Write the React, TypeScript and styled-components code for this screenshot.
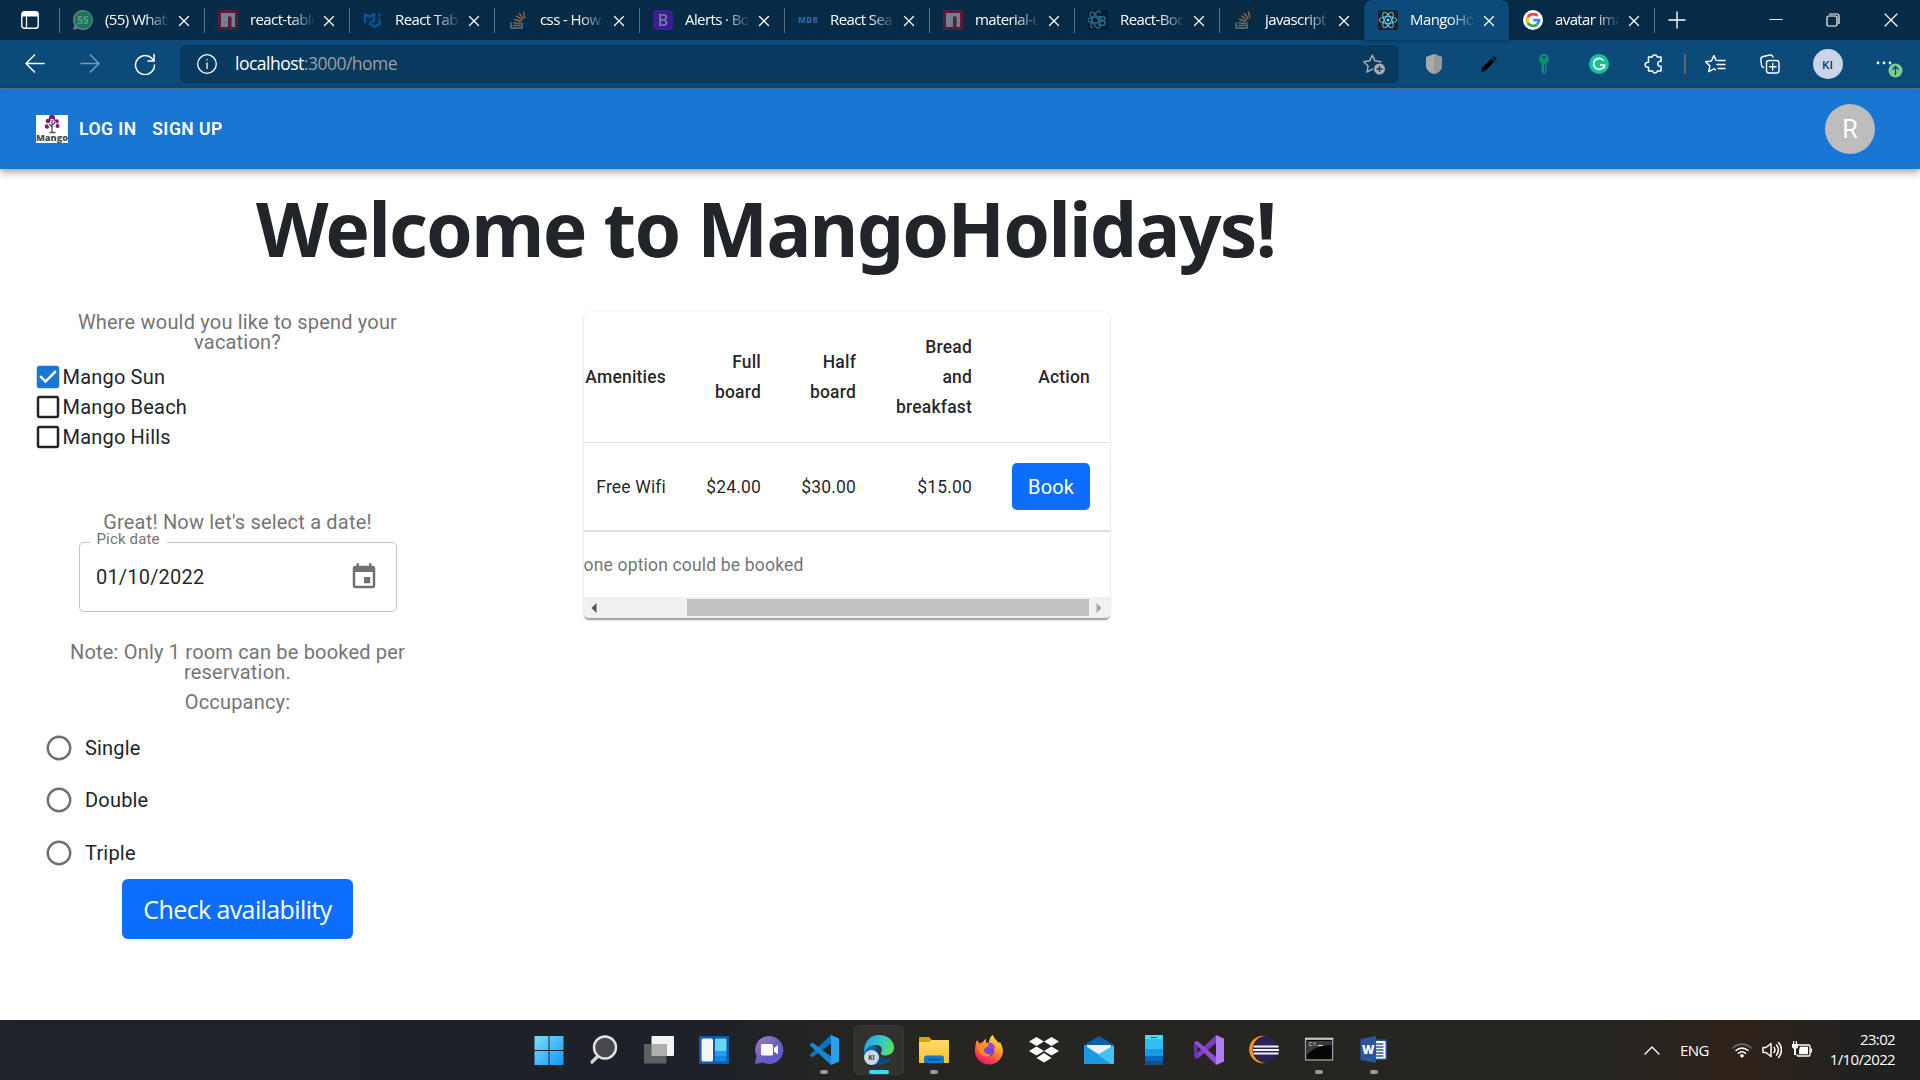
import React from "react";
import styled, { createGlobalStyle, css } from "styled-components";

const GlobalStyle = createGlobalStyle`
  *, *::before, *::after { box-sizing: border-box; }
  html, body { margin: 0; padding: 0; background: #fff; overflow: hidden; }
  body { font-family: Roboto, "Liberation Sans", sans-serif; color: #212529; }
  svg { display: block; flex: none; }
  button { border: 0; margin: 0; padding: 0; background: none; font: inherit; color: inherit; }
`;

const uiFont = css`font-family: "Open Sans", "Noto Sans", sans-serif;`;

const Screen = styled.div`
  width: 1920px;
  height: 1080px;
  display: flex;
  flex-direction: column;
  overflow: hidden;
  background: #fff;
`;

/* ---------- Browser chrome ---------- */

const TabStrip = styled.div`
  height: 40px;
  flex: none;
  display: flex;
  background: #072b47;
  color: #fff;
  ${uiFont}
`;

const TabActions = styled.div`
  width: 59px;
  flex: none;
  display: flex;
  align-items: center;
  justify-content: center;
`;

const Tab = styled.div<{ $active?: boolean; $line?: boolean }>`
  position: relative;
  width: 145px;
  flex: none;
  display: flex;
  align-items: center;
  padding-left: 14px;
  border-radius: 8px 8px 0 0;
  background: ${(p) => (p.$active ? "#0c4a7a" : "transparent")};
  box-shadow: ${(p) => (p.$active ? "0 0 4px rgba(0,0,0,.5)" : "none")};
  &::before {
    content: "";
    position: absolute;
    left: 0;
    top: 8px;
    width: 1px;
    height: 25px;
    background: ${(p) => (p.$line ? "#60727f" : "transparent")};
  }
`;

const Favicon = styled.span<{ $dim?: boolean }>`
  width: 20px;
  height: 20px;
  flex: none;
  opacity: ${(p) => (p.$dim ? 0.6 : 1)};
`;

const TabTitle = styled.span`
  width: 63px;
  flex: none;
  margin-left: 12px;
  overflow: hidden;
  white-space: nowrap;
  font-size: 15px;
  line-height: 22px;
  letter-spacing: -0.6px;
  padding-bottom: 2px;
  mask-image: linear-gradient(90deg, #000 62%, transparent 104%);
`;

const TabClose = styled.span`
  width: 12px;
  height: 12px;
  margin-left: 10px;
  margin-top: 1px;
`;

const NewTab = styled.div`
  position: relative;
  width: 93px;
  display: flex;
  align-items: center;
  padding-left: 14px;
  &::before {
    content: "";
    position: absolute;
    left: 0;
    top: 8px;
    width: 1px;
    height: 25px;
    background: #60727f;
  }
`;

const WindowControls = styled.div`
  width: 173px;
  display: flex;
  svg { margin: 12px 20.75px 0 20.75px; }
`;

const Toolbar = styled.div`
  height: 48px;
  flex: none;
  display: flex;
  align-items: center;
  background: #0c4a7a;
  color: #fff;
  ${uiFont}
`;

const NavCell = styled.div<{ $w: number; $faded?: boolean }>`
  width: ${(p) => p.$w}px;
  flex: none;
  display: flex;
  justify-content: center;
  opacity: ${(p) => (p.$faded ? 0.45 : 1)};
`;

const AddressBar = styled.div`
  width: 1219px;
  height: 38px;
  flex: none;
  display: flex;
  align-items: center;
  padding: 0 13px 0 17px;
  border-radius: 5px;
  background: #083a5f;
`;

const Url = styled.span`
  flex: 1;
  margin-left: 18px;
  padding-bottom: 2px;
  font-size: 17.5px;
  letter-spacing: -0.5px;
  color: #9a9fa3;
  b { font-weight: 400; color: #fff; }
`;

const ToolDivider = styled.div`
  width: 2px;
  height: 20px;
  margin-left: -6px;
  background: #5f6870;
`;

const Profile = styled.div`
  width: 30px;
  height: 30px;
  display: grid;
  place-items: center;
  border-radius: 50%;
  background: #cbd5e9;
  color: #1c2a5c;
  font-size: 11.5px;
  font-weight: 600;
`;

const ChromeEdge = styled.div`
  height: 1px;
  flex: none;
  background: #4f7790;
`;

/* ---------- Site header ---------- */

const AppBar = styled.header`
  height: 80px;
  flex: none;
  display: flex;
  align-items: center;
  padding: 0 45px 0 36px;
  background: #1976d2;
  color: #fff;
  z-index: 1;
  box-shadow: 0 2.5px 5px -1px rgba(0,0,0,.2), 0 5px 6.25px 0 rgba(0,0,0,.14), 0 1.25px 12.5px 0 rgba(0,0,0,.12);
`;

const NavLinks = styled.nav`
  flex: 1;
  display: flex;
  gap: 15.5px;
  margin-left: 11px;
  font-size: 17.5px;
  font-weight: 600;
  line-height: 30px;
  letter-spacing: 0.5px;
`;

const Avatar = styled.div`
  width: 50px;
  height: 50px;
  display: grid;
  place-items: center;
  border-radius: 50%;
  background: #bdbdbd;
  font-size: 25px;
`;

/* ---------- Page ---------- */

const Page = styled.main`
  flex: 1;
  min-height: 0;
`;

const Title = styled.h1`
  margin: 0;
  height: 143px;
  padding: 14px 0 0 256px;
  font-family: "Noto Sans", "Open Sans", sans-serif;
  font-size: 75px;
  font-weight: 700;
  line-height: 90px;
  letter-spacing: -1.7px;
  white-space: nowrap;
  color: #212529;
`;

const Columns = styled.div`
  display: flex;
  align-items: flex-start;
`;

const Form = styled.form`
  width: 583.5px;
  display: flex;
  flex-direction: column;
  padding-left: 33px;
`;

const Legend = styled.p<{ $top?: number }>`
  width: 409px;
  margin: ${(p) => p.$top ?? 0}px 0 0;
  text-align: center;
  font-size: 20px;
  line-height: 20px;
  letter-spacing: 0.19px;
  color: #757575;
`;

const CheckList = styled.div`
  margin-top: 10px;
  height: 90px;
`;

const CheckRow = styled.label`
  display: flex;
  align-items: center;
  height: 30px;
  font-size: 20px;
  letter-spacing: 0.19px;
  svg { margin-right: -0.5px; }
`;

const DateField = styled.div`
  position: relative;
  width: 318px;
  height: 70px;
  display: flex;
  align-items: center;
  justify-content: space-between;
  margin: 10px 0 0 46px;
  padding: 0 17px 0 16px;
  border: 1px solid #c4c4c4;
  border-radius: 5px;
  font-size: 20px;
  letter-spacing: 0.19px;
  color: rgba(0, 0, 0, 0.87);
`;

const FieldLabel = styled.span`
  position: absolute;
  left: 10px;
  top: -14px;
  padding: 0 7px 0 6.5px;
  background: #fff;
  font-size: 15px;
  line-height: 20px;
  letter-spacing: 0.16px;
  color: #757575;
`;

const Radios = styled.div`
  margin-top: 9.5px;
`;

const RadioRow = styled.label`
  display: flex;
  align-items: center;
  gap: 11px;
  height: 52.5px;
  padding-left: 11px;
  font-size: 20px;
  letter-spacing: 0.19px;
`;

const Primary = styled.button<{ $large?: boolean }>`
  border-radius: ${(p) => (p.$large ? 6 : 5)}px;
  background: #0d6efd;
  color: #fff;
  ${(p) =>
    p.$large
      ? css`
          ${uiFont}
          width: 231px;
          height: 60px;
          margin: 0 0 0 89px;
          font-size: 25px;
          letter-spacing: -0.6px;
        `
      : css`
          width: 78px;
          height: 47px;
          font-size: 20px;
          letter-spacing: 0.1px;
        `}
`;

const Card = styled.section`
  width: 526.5px;
  overflow: hidden;
  border-radius: 5px;
  background: #fff;
  box-shadow: 0 2.5px 1.25px -1.25px rgba(0,0,0,.2), 0 1.25px 1.25px 0 rgba(0,0,0,.14), 0 1.25px 3.75px 0 rgba(0,0,0,.12);
`;

const Row = styled.div<{ $head?: boolean }>`
  display: grid;
  grid-template-columns: 102.5px 95px 95px 116px 118px;
  align-items: center;
  height: ${(p) => (p.$head ? 131 : 88)}px;
  border-bottom: 1px solid #e0e0e0;
  font-size: 17.5px;
  font-weight: ${(p) => (p.$head ? 500 : 400)};
  line-height: 30px;
  letter-spacing: ${(p) => (p.$head ? 0.19 : 0.16)}px;
  color: rgba(0, 0, 0, 0.87);
`;

const Cell = styled.div`
  display: flex;
  flex-direction: column;
  align-items: flex-end;
  padding-right: 20px;
`;

const Caption = styled.p`
  margin: 0;
  height: 66px;
  border-top: 1px solid #e0e0e0;
  padding-top: 20px;
  font-size: 17.5px;
  line-height: 26px;
  letter-spacing: 0.18px;
  color: #757575;
`;

const ScrollBar = styled.div`
  height: 21px;
  display: flex;
  align-items: center;
  background: #f1f1f1;
`;

const Arrow = styled.span<{ $right?: boolean }>`
  width: 21px;
  display: flex;
  justify-content: center;
  color: ${(p) => (p.$right ? "#a3a3a3" : "#505050")};
  transform: ${(p) => (p.$right ? "scaleX(-1)" : "none")};
`;

const Thumb = styled.span`
  width: 402px;
  height: 17px;
  margin-left: 82px;
  background: #c1c1c1;
`;

/* ---------- Taskbar ---------- */

const Taskbar = styled.footer`
  height: 60px;
  flex: none;
  display: flex;
  align-items: center;
  padding-left: 524px;
  background: linear-gradient(90deg, #1e2229 0%, #1e2228 38%, #262521 45%, #262521 83%, #2c221a 90%, #2a221b 93%, #212121 97%, #202020 100%);
  color: #fff;
  ${uiFont}
`;

const Apps = styled.div`
  display: flex;
  flex: none;
  width: 880px;
  gap: 5px;
`;

const AppTile = styled.div<{ $active?: boolean; $running?: boolean }>`
  position: relative;
  width: 50px;
  height: 50px;
  flex: none;
  display: grid;
  place-items: center;
  border-radius: 5px;
  background: ${(p) => (p.$active ? "#32312f" : "transparent")};
  border: 1px solid ${(p) => (p.$active ? "#3b3a38" : "transparent")};
  &::after {
    content: "";
    position: absolute;
    left: 50%;
    bottom: 0;
    width: ${(p) => (p.$active ? 20 : 8)}px;
    height: 4px;
    border-radius: 2px;
    transform: translateX(-50%);
    background: ${(p) => (p.$active ? "#2fe0fb" : p.$running ? "#9a9a99" : "transparent")};
  }
`;

const Tray = styled.div`
  flex: 1;
  display: flex;
  align-items: center;
  padding-left: 240px;
  font-size: 15px;
`;

const Lang = styled.span`
  margin: 0 22px 0 20px;
  width: 30px;
  letter-spacing: -0.6px;
`;

const Clock = styled.div`
  flex: 1;
  padding: 0 25px 2px 0;
  text-align: right;
  line-height: 20px;
  letter-spacing: -0.65px;
`;

/* ---------- Drawings ---------- */

type IconProps = { w: number; h?: number; box?: string; sw?: number; children: React.ReactNode };
const Line = ({ w, h = w, box, sw = 1.4, children }: IconProps) => (
  <svg width={w} height={h} viewBox={box ?? `0 0 ${w} ${h}`} fill="none" stroke="currentColor" strokeWidth={sw} strokeLinecap="round" strokeLinejoin="round">
    {children}
  </svg>
);
const Fill = ({ w, h = w, box, children }: IconProps) => (
  <svg width={w} height={h} viewBox={box ?? `0 0 ${w} ${h}`}>{children}</svg>
);

const svgText = { fontFamily: '"Open Sans", sans-serif', textAnchor: "middle" as const };

const WhatsApp = () => (
  <Fill w={20}>
    <path d="M10 0a10 10 0 1 1-4.8 18.8L0 20l1.300-5A10 10 0 0 1 10 0z" fill="#9fb0b4" />
    <circle cx="10.200" cy="9.900" r="8.500" fill="#10b35a" />
    <text x="10" y="13.500" fontSize="10" fontWeight="700" fill="#b9d0c6" {...svgText}>55</text>
  </Fill>
);
const Npm = () => (
  <Fill w={20}>
    <rect width="20" height="20" fill="#931228" />
    <path d="M3 3h14v14h-3.500V6.500H10V17H3z" fill="#aebccb" />
  </Fill>
);
const Mui = () => (
  <Line w={20} sw={2.300}>
    <g stroke="#0a70d0">
      <path d="M2 12V4l4.500 3L11 4v6.500M7 14l4.500 3 5-3V9.500M11 10.500 7 13M16.500 4v1.500" />
    </g>
  </Line>
);
const StackOverflow = () => (
  <Line w={20} sw={1.500}>
    <path d="M3 13v5h11v-5" stroke="#93a3ad" />
    <path d="M5.500 15.500h6.500M5.800 12.700l6.400.7M6.600 9.500l6 1.800M8.600 6.200l5 3.500M11.500 3.500l3.500 5M15.500 2l1.300 5.500" stroke="#d58845" />
  </Line>
);
const Bootstrap = () => (
  <Fill w={20}>
    <rect width="20" height="20" rx="3.500" fill="#5f18c2" />
    <text x="10" y="16" fontSize="16" fontWeight="600" fill="#b9b2dd" {...svgText}>B</text>
  </Fill>
);
const Mdb = () => (
  <Fill w={20}>
    <text x="10" y="13" fontSize="8" fontWeight="800" textLength="20" fill="#3a94dc" {...svgText}>MD<tspan fill="#7065e0">B</tspan></text>
  </Fill>
);
const ReactBootstrap = () => (
  <Fill w={20}>
    <rect width="20" height="20" fill="#03121f" />
    <g fill="none" stroke="#2f9bb8" strokeWidth="1.400">
      <ellipse cx="7" cy="10" rx="7" ry="3" />
      <ellipse cx="7" cy="10" rx="3" ry="9" transform="rotate(-25 7 10)" />
      <path d="M5 17C2 20 2 12 7 4c3-4 5-4 5-1" />
    </g>
    <text x="14" y="15.500" fontSize="15" fontWeight="600" fill="#2f9bb8" {...svgText}>B</text>
  </Fill>
);
const ReactLogo = () => (
  <Fill w={20}>
    <rect width="20" height="20" rx="1.500" fill="#20232a" />
    <g fill="none" stroke="#61dafb" strokeWidth=".9">
      <ellipse cx="10" cy="10" rx="8.800" ry="3.400" />
      <ellipse cx="10" cy="10" rx="8.800" ry="3.400" transform="rotate(60 10 10)" />
      <ellipse cx="10" cy="10" rx="8.800" ry="3.400" transform="rotate(120 10 10)" />
    </g>
    <circle cx="10" cy="10" r="1.500" fill="#61dafb" />
  </Fill>
);
const Google = () => (
  <Fill w={20}>
    <circle cx="10" cy="10" r="10" fill="#fff" />
    <g fill="none" strokeWidth="2.800">
      <path d="M14.400 5.900A6 6 0 0 0 4.900 7" stroke="#ea4335" />
      <path d="M4.900 6.900a6 6 0 0 0 0 6.200" stroke="#fbbc05" />
      <path d="M4.900 13a6 6 0 0 0 8.900 1.600" stroke="#34a853" />
      <path d="M13.700 14.700A6 6 0 0 0 16 10.200H10.200" stroke="#4285f4" />
    </g>
  </Fill>
);
const Cross = () => <Line w={12} sw={1.300}><path d="M1.500 1.500l9 9M10.500 1.500l-9 9" /></Line>;

const starPath = "M9 1.500l2.300 4.900 5.200.7-3.800 3.700.9 5.300L9 13.600l-4.600 2.500.9-5.300L1.500 7.100l5.200-.7z";

const tabs: { title: string; icon: React.ReactNode; active?: boolean; noLine?: boolean; bright?: boolean }[] = [
  { title: "(55) WhatsApp", icon: <WhatsApp /> },
  { title: "react-table", icon: <Npm /> },
  { title: "React Table", icon: <Mui /> },
  { title: "css - How to", icon: <StackOverflow /> },
  { title: "Alerts · Bootstrap", icon: <Bootstrap /> },
  { title: "React Search", icon: <Mdb /> },
  { title: "material-ui", icon: <Npm /> },
  { title: "React-Bootstrap", icon: <ReactBootstrap /> },
  { title: "javascript -", icon: <StackOverflow /> },
  { title: "MangoHolidays", icon: <ReactLogo />, active: true, noLine: true, bright: true },
  { title: "avatar image", icon: <Google />, noLine: true, bright: true },
];

const MangoLogo = () => (
  <Fill w={32} h={28}>
    <rect width="32" height="28" fill="#fff" />
    <g fill="#82186f">
      <circle cx="16" cy="3" r="3.200" />
      <circle cx="12" cy="6" r="2.300" />
      <circle cx="20.500" cy="6.500" r="2.300" />
      <circle cx="11" cy="11.500" r="2.200" />
      <circle cx="21.500" cy="11" r="2" />
    </g>
    <path d="M16 4v12M16.500 10l3.500-3M16 12l-3.500-3" stroke="#fff" strokeWidth="2.800" />
    <path d="M16 5v12M16.500 10l3-3M16 12l-3-3M13.500 17.500h6" stroke="#55506a" strokeWidth="1.300" />
    <text x="16" y="25.500" fontSize="9" fontWeight="800" textLength="32" lengthAdjust="spacingAndGlyphs" fill="#46504c" {...svgText}>Mango</text>
  </Fill>
);

const Checkbox = ({ on }: { on?: boolean }) => (
  <Fill w={30} box="0 0 24 24">
    <path
      fill={on ? "#1976d2" : "#212529"}
      d={on
        ? "M19 3H5c-1.110 0-2 .9-2 2v14c0 1.100.89 2 2 2h14c1.110 0 2-.9 2-2V5c0-1.100-.89-2-2-2zm-9 14l-5-5 1.410-1.410L10 14.170l7.590-7.590L19 8l-9 9z"
        : "M19 5v14H5V5h14m0-2H5c-1.100 0-2 .9-2 2v14c0 1.100.9 2 2 2h14c1.100 0 2-.9 2-2V5c0-1.100-.9-2-2-2z"}
    />
  </Fill>
);
const RadioIcon = () => (
  <Fill w={30} box="0 0 24 24"><circle cx="12" cy="12" r="9" fill="none" stroke="#707070" strokeWidth="1.900" /></Fill>
);

/* Taskbar application icons, each on a 30px square */
const Start = () => (
  <Fill w={30}>
    <defs><linearGradient id="st" x1="0" y1="0" x2="1" y2="1"><stop offset="0" stopColor="#80dcfc" /><stop offset="1" stopColor="#1098f8" /></linearGradient></defs>
    <path fill="url(#st)" d="M.5 1.500A.5.5 0 0 1 1 1h13.500v14H.5zM15.500 1H29a.5.5 0 0 1 .5.500V15h-14zM.5 16h14v14H1a.5.5 0 0 1-.5-.5zM15.500 16h14v13.500a.5.5 0 0 1-.5.500H15.500z" />
  </Fill>
);
const Search = () => (
  <Fill w={30}>
    <path d="M9.500 20.500L3 27" stroke="#d8d8d8" strokeWidth="3.200" strokeLinecap="round" />
    <circle cx="16" cy="12.500" r="11" fill="#47484c" stroke="#e4e4e4" strokeWidth="2.400" />
  </Fill>
);
const TaskView = () => (
  <Fill w={30}>
    <rect x="7.500" y="1" width="22.500" height="20" rx="1" fill="#f3f3f3" />
    <rect x="0" y="9" width="22.500" height="19.500" rx="1" fill="#5f6062" />
    <path d="M7.500 9h15v12h-15z" fill="#aeaeae" />
  </Fill>
);
const Widgets = () => (
  <Fill w={30}>
    <rect y="1" width="30" height="28" rx="1" fill="#0b5cac" />
    <rect x="2.500" y="3.500" width="11.500" height="23" rx="1.500" fill="#f5f5f5" />
    <rect x="16" y="3.500" width="11.500" height="12.500" rx="1" fill="#68d3fb" />
    <rect x="16" y="16" width="11.500" height="5" fill="#1ba0f4" />
    <rect x="16" y="21" width="11.500" height="5.500" fill="#1089e6" />
  </Fill>
);
const Chat = () => (
  <Fill w={30}>
    <defs><linearGradient id="ch" x1="0" y1="0" x2="1" y2="1"><stop offset="0" stopColor="#a97fb8" /><stop offset=".5" stopColor="#6960c4" /><stop offset="1" stopColor="#5558cf" /></linearGradient></defs>
    <path d="M15.500 1A14 14 0 1 1 9 27.500L1 29l1.500-8A14 14 0 0 1 15.500 1z" fill="url(#ch)" />
    <rect x="7" y="9" width="12" height="11.500" rx="1.500" fill="#fff" />
    <path d="M20 13l4-3v9.500l-4-3z" fill="#fff" />
  </Fill>
);
const VsCode = () => (
  <Fill w={30}>
    <path d="M22 0L.5 20 3.500 22.500 22 8.500z" fill="#0873c4" />
    <path d="M.5 10l3-2.500L22 21.500V30z" fill="#1688d4" />
    <path d="M22 0l8 3.500v23L22 30z" fill="#27a2ee" />
  </Fill>
);
const Edge = () => (
  <Fill w={30}>
    <defs><linearGradient id="ed" x1="0" y1=".3" x2="1" y2=".5"><stop offset="0" stopColor="#2aa5e5" /><stop offset=".6" stopColor="#38c9c0" /><stop offset="1" stopColor="#60dd5a" /></linearGradient></defs>
    <path d="M.5 15C4 8 14 10 14 15c-2 4 2 9 8 9 3 0 4-1.500 5.500-1.500C25 27 20 29.500 14.500 29.500A14 14 0 0 1 .5 15z" fill="#0f62ac" />
    <path d="M.3 13C2 4 8 0 15 0c9 0 15 6 15 12.500 0 6-5 8-9 8-3 0-5-1.500-4-3 2-3 .5-7.500-4.500-7.500C6 10 1.500 13 .3 19z" fill="url(#ed)" />
    <path d="M10 15c-2 5-1 11 4 14 6 1 11-1 13.500-6-4 2-9 1-11.500-2-2-3-2-4-1.500-7-1.500-1-3.500-1-4.500 1z" fill="#0a4a80" />
    <circle cx="7.500" cy="22.500" r="7.500" fill="#cdd7ea" />
    <text x="7.500" y="25" fontSize="6.500" fontWeight="700" fill="#26345f" {...svgText}>KI</text>
  </Fill>
);
const Folder = () => (
  <Fill w={30}>
    <defs><linearGradient id="fo" x1="0" y1="0" x2="0" y2="1"><stop offset="0" stopColor="#ffdd6a" /><stop offset="1" stopColor="#fbbf2c" /></linearGradient></defs>
    <path d="M0 3a1 1 0 0 1 1-1h9l3 3v5H0z" fill="#dfa006" />
    <path d="M0 7h10l3-2h16a1 1 0 0 1 1 1v22H0z" fill="url(#fo)" />
    <path d="M5 28v-5a2.500 2.500 0 0 1 2.500-2.500h15A2.500 2.500 0 0 1 25 23v5z" fill="#1179cc" />
    <path d="M9 24.500h12" stroke="#0b4f96" strokeWidth="1.400" strokeLinecap="round" />
  </Fill>
);
const Firefox = () => (
  <Fill w={30}>
    <defs><linearGradient id="ff" x1=".8" y1="0" x2=".3" y2="1"><stop offset="0" stopColor="#fff044" /><stop offset=".45" stopColor="#ff9228" /><stop offset=".8" stopColor="#fb3852" /><stop offset="1" stopColor="#e8177a" /></linearGradient></defs>
    <path d="M3 5l2.500 3.500L9 7c1-2 2.500-3 3-3v4l3-1c0-3 2-6 4-7 1 4 4 5 5.500 8l1.500-1c2 3 3 7 3 9a14 13.500 0 1 1-28 0C1 11 2 7 3 5z" fill="url(#ff)" />
    <circle cx="15" cy="16" r="5.500" fill="#7b45d8" />
    <path d="M4 10c5-2 7 0 10 1-1 2-4 2-4 4 0 3 3 5 7 4-4 5-13 3-13-9z" fill="#ff8a24" />
    <path d="M13.500 8c3-2 8 1 8 7 0-2-3-4-6-3.500z" fill="#9d42e2" />
  </Fill>
);
const Dropbox = () => (
  <Fill w={30}>
    <path fill="#fff" d="M7.500 2L15 6.500 7.500 11 0 6.500zM22.500 2L30 6.500 22.500 11 15 6.500zM7.500 11.500L15 16l-7.500 4.500L0 16zM22.500 11.500L30 16l-7.500 4.500L15 16zM15 18l7.500 5L15 27.500 7.500 23z" />
  </Fill>
);
const Mail = () => (
  <Fill w={30}>
    <path d="M0 10L15 1l15 9v5H0z" fill="#0b5da8" />
    <path d="M3 10h24v8l-12 5-12-6z" fill="#f1efed" />
    <path d="M0 10l15 9L30 10v18a1 1 0 0 1-1 1H1a1 1 0 0 1-1-1z" fill="#3fc5f4" />
    <path d="M0 10l27 19H1a1 1 0 0 1-1-1z" fill="#1d97e2" />
  </Fill>
);
const Phone = () => (
  <Fill w={30}>
    <rect x="6" width="18" height="30" rx="1" fill="#45dffc" />
    <path d="M6 4h18v11H6z" fill="#34bdf0" />
    <path d="M6 14h18v8H6z" fill="#179be3" />
    <path d="M6 21h18v5H6z" fill="#0569bb" />
    <path d="M6 26h18v3a1 1 0 0 1-1 1H7a1 1 0 0 1-1-1z" fill="#174f83" />
    <path d="M12 2.500h6" stroke="#0e6391" />
  </Fill>
);
const VisualStudio = () => (
  <Fill w={30}>
    <path d="M0 7.500L3.500 6v18L0 22.500z" fill="#6b2fa8" />
    <path d="M3.500 24L22 8V0L2 19z" fill="#7a3cbc" />
    <path d="M0 7.500L3.500 6 22 22v8z" fill="#8d50cf" />
    <path d="M22 0l8 3.500v23L22 30z" fill="#b47af0" />
  </Fill>
);
const Eclipse = () => (
  <Fill w={30}>
    <circle cx="14" cy="14.500" r="13.800" fill="#f7941e" />
    <circle cx="17" cy="14.500" r="13.500" fill="#211f1f" />
    <circle cx="17" cy="14.500" r="12.600" fill="#2c2255" />
    <path d="M4.500 11.500h25M4 15h26M4.500 18.500h25" stroke="#f4f2fa" strokeWidth="1.800" />
  </Fill>
);
const Terminal = () => (
  <Fill w={30}>
    <rect x="1.600" y="3.500" width="27" height="21.500" fill="#050505" stroke="#9a9a9e" strokeWidth="1.400" />
    <path d="M2.300 6h25.500v4C16 10 8 14 4 19l-1.700 1z" fill="#3b3b3b" />
    <path d="M1 3.800h28" stroke="#c8ccd4" strokeWidth="2" />
    <text x="8.500" y="11" fontSize="6" fill="#e5e5e5" {...svgText}>C:\</text>
    <path d="M14 10.500h5" stroke="#e5e5e5" />
  </Fill>
);
const Word = () => (
  <Fill w={30}>
    <rect x="15" y="4.500" width="13" height="20.500" rx="1" fill="#2b579a" />
    <path d="M16 6h10.500v17.500H16z" fill="#fff" />
    <path d="M17 9h7.500M17 12h7.500M17 15h7.500M17 18h7.500M17 21h7.500" stroke="#2b579a" strokeWidth="1.300" />
    <path d="M1.500 4L17 1v27L1.500 25z" fill="#2b579a" />
    <text x="9.300" y="19" fontSize="12" fontWeight="800" fill="#fff" {...svgText}>W</text>
  </Fill>
);

const apps: { icon: React.ReactNode; active?: boolean; running?: boolean }[] = [
  { icon: <Start /> }, { icon: <Search /> }, { icon: <TaskView /> }, { icon: <Widgets /> }, { icon: <Chat /> },
  { icon: <VsCode />, running: true }, { icon: <Edge />, active: true }, { icon: <Folder />, running: true },
  { icon: <Firefox /> }, { icon: <Dropbox /> }, { icon: <Mail /> }, { icon: <Phone /> }, { icon: <VisualStudio /> },
  { icon: <Eclipse /> }, { icon: <Terminal />, running: true }, { icon: <Word />, running: true },
];

const ArrowHead = () => <Fill w={6} h={10}><path d="M5.500 0v10L.5 5z" fill="currentColor" /></Fill>;

export default function App() {
  return (
    <Screen>
      <GlobalStyle />
      <TabStrip>
        <TabActions>
          <Fill w={18}>
            <rect x=".8" y=".8" width="16.400" height="16.400" rx="2.500" fill="none" stroke="#fff" strokeWidth="1.400" />
            <path d="M1 1h16v4.500H1z" fill="#fff" /><path d="M5.500 5v12" stroke="#fff" strokeWidth="1.300" />
          </Fill>
        </TabActions>
        {tabs.map((t, i) => (
          <Tab key={i} $active={t.active} $line={!t.noLine}>
            <Favicon $dim={!t.bright}>{t.icon}</Favicon>
            <TabTitle>{t.title}</TabTitle>
            <TabClose><Cross /></TabClose>
          </Tab>
        ))}
        <NewTab><Line w={18} sw={1.400}><path d="M9 1v16M1 9h16" /></Line></NewTab>
        <WindowControls>
          <Line w={16} sw={1.200}><path d="M2 7.500h12" /></Line>
          <Line w={16} sw={1.200}><rect x="2" y="4" width="10" height="10" rx="1.500" /><path d="M4.500 2H12a2 2 0 0 1 2 2v7.500" /></Line>
          <Line w={16} sw={1.200}><path d="M2 2l12 12M14 2L2 14" /></Line>
        </WindowControls>
      </TabStrip>

      <Toolbar>
        <NavCell $w={70}><Line w={20} sw={1.500}><path d="M19 9.500H1M9.500 1L1 9.500 9.500 18" /></Line></NavCell>
        <NavCell $w={40} $faded><Line w={20} sw={1.500}><path d="M1 9.500h18M10.500 1L19 9.500 10.500 18" /></Line></NavCell>
        <NavCell $w={70}><Line w={22} sw={1.500}><path d="M19.800 8.500A9.500 9.500 0 1 0 20.500 12M20 1.500v6.500h-6" /></Line></NavCell>
        <AddressBar>
          <Line w={20} sw={1.300}><circle cx="10" cy="10" r="9.300" /><path d="M10 9v5.500M10 5.700v.2" /></Line>
          <Url><b>localhost</b>:3000/home</Url>
          <Fill w={24}>
            <path d={starPath} transform="translate(0 1.500) scale(1.150)" fill="none" stroke="#a9adaf" strokeWidth="1.300" strokeLinejoin="round" />
            <circle cx="17.500" cy="17" r="6.500" fill="#083a5f" /><circle cx="17.500" cy="17" r="5.500" fill="#a9adaf" />
            <path d="M17.500 14v6M14.500 17h6" stroke="#083a5f" strokeWidth="1.300" />
          </Fill>
        </AddressBar>
        <NavCell $w={70}>
          <Fill w={16} h={20}><path d="M8 0l8 3v9c0 4-4 7-8 8-4-1-8-4-8-8V3z" fill="#aaa" /><path d="M8 0l8 3v9c0 4-4 7-8 8z" fill="#999" /></Fill>
        </NavCell>
        <NavCell $w={39}>
          <Fill w={16}><path d="M0 16l1-4L10.500 2.500l3 3L4 15zM11.500 1.500L13 0l3 3-1.500 1.500z" fill="#000" /></Fill>
        </NavCell>
        <NavCell $w={72}>
          <Fill w={10} h={20}><circle cx="5" cy="5" r="5" fill="#07906f" /><circle cx="5" cy="3.500" r="1.500" fill="#0c4a7a" /><path d="M2.500 9h5v9L5 20l-2.500-2z" fill="#07906f" /><path d="M5.500 10v8" stroke="#0c4a7a" /></Fill>
        </NavCell>
        <NavCell $w={37}>
          <Fill w={20}><circle cx="10" cy="10" r="10" fill="#15c39a" /><path d="M14.500 6.500a5.500 5.500 0 1 0 1 4.500h-4.500M15.300 10.500v4" fill="none" stroke="#fff" strokeWidth="1.700" /></Fill>
        </NavCell>
        <NavCell $w={73}>
          <Line w={20} sw={1.500}><path d="M4.500 3h3.700a2.600 2.600 0 0 1 5 0h3.800v4.500c-4-1.300-4.500 5-.5 4.800l.5-.1V17h-3.500a2.600 2.600 0 0 1-5 0h-4v-3.800c-4.500 1-4.500-5.700 0-5z" /></Line>
        </NavCell>
        <ToolDivider />
        <NavCell $w={57}>
          <Fill w={22}>
            <path d={starPath} transform="translate(0 1) scale(1.100)" fill="none" stroke="#fff" strokeWidth="1.300" strokeLinejoin="round" />
            <path d="M12 8h10v12H12z" fill="#0c4a7a" /><path d="M14 7.500h7M13 11.500h8M14 15.500h7" stroke="#fff" strokeWidth="1.400" strokeLinecap="round" />
          </Fill>
        </NavCell>
        <NavCell $w={53}>
          <Line w={20} sw={1.400}><rect x="6.500" y="6.500" width="12.500" height="12.500" rx="2.500" /><path d="M12.700 9.500v6.500M9.500 12.700H16M3.500 13.500A2.500 2.500 0 0 1 1.500 11L.8 5.500a3 3 0 0 1 2.400-3L10 1a2.500 2.500 0 0 1 3 2" /></Line>
        </NavCell>
        <NavCell $w={63}><Profile>KI</Profile></NavCell>
        <NavCell $w={59}>
          <Fill w={28} h={28}>
            <circle cx="3" cy="13" r="1.400" fill="#fff" /><circle cx="9" cy="13" r="1.400" fill="#fff" /><circle cx="15" cy="13" r="1.400" fill="#fff" />
            <circle cx="20.500" cy="20.500" r="7" fill="#7fca8f" /><path d="M20.500 25v-8M17.500 19.500l3-3 3 3" fill="none" stroke="#124a63" strokeWidth="1.300" />
          </Fill>
        </NavCell>
      </Toolbar>
      <ChromeEdge />

      <AppBar>
        <MangoLogo />
        <NavLinks><span>LOG IN</span><span>SIGN UP</span></NavLinks>
        <Avatar>R</Avatar>
      </AppBar>

      <Page>
        <Title>Welcome to MangoHolidays!</Title>
        <Columns>
          <Form>
            <Legend>Where would you like to spend your<br />vacation?</Legend>
            <CheckList>
              <CheckRow><Checkbox on />Mango Sun</CheckRow>
              <CheckRow><Checkbox />Mango Beach</CheckRow>
              <CheckRow><Checkbox />Mango Hills</CheckRow>
            </CheckList>
            <Legend $top={60}>Great! Now let's select a date!</Legend>
            <DateField>
              <FieldLabel>Pick date</FieldLabel>
              <span>01/10/2022</span>
              <Fill w={30} box="0 0 24 24">
                <path fill="#707070" d="M17 12h-5v5h5v-5zM16 1v2H8V1H6v2H5c-1.110 0-1.990.9-1.990 2L3 19c0 1.100.89 2 2 2h14c1.100 0 2-.9 2-2V5c0-1.100-.9-2-2-2h-1V1h-2zm3 18H5V8h14v11z" />
              </Fill>
            </DateField>
            <Legend $top={30}>Note: Only 1 room can be booked per<br />reservation.</Legend>
            <Legend $top={10}>Occupancy:</Legend>
            <Radios>
              <RadioRow><RadioIcon />Single</RadioRow>
              <RadioRow><RadioIcon />Double</RadioRow>
              <RadioRow><RadioIcon />Triple</RadioRow>
            </Radios>
            <Primary type="button" $large>Check availability</Primary>
          </Form>

          <Card>
            <Row $head>
              <Cell>Amenities</Cell>
              <Cell><span>Full</span><span>board</span></Cell>
              <Cell><span>Half</span><span>board</span></Cell>
              <Cell><span>Bread</span><span>and</span><span>breakfast</span></Cell>
              <Cell>Action</Cell>
            </Row>
            <Row>
              <Cell>Free Wifi</Cell>
              <Cell>$24.00</Cell>
              <Cell>$30.00</Cell>
              <Cell>$15.00</Cell>
              <Cell><Primary type="button">Book</Primary></Cell>
            </Row>
            <Caption>one option could be booked</Caption>
            <ScrollBar>
              <Arrow><ArrowHead /></Arrow>
              <Thumb />
              <Arrow $right><ArrowHead /></Arrow>
            </ScrollBar>
          </Card>
        </Columns>
      </Page>

      <Taskbar>
        <Apps>
          {apps.map((a, i) => (
            <AppTile key={i} $active={a.active} $running={a.running}>{a.icon}</AppTile>
          ))}
        </Apps>
        <Tray>
          <Line w={16} h={9} sw={1.400}><path d="M1 8l7-7 7 7" /></Line>
          <Lang>ENG</Lang>
          <Line w={20} h={18} sw={1.600}>
            <path d="M1 7a12.500 12.500 0 0 1 18 0" stroke="#6e6862" />
            <path d="M4 9.500a8.800 8.800 0 0 1 12 0M6.500 12.300a5 5 0 0 1 7 0" /><circle cx="10" cy="14.800" r="1" fill="#fff" />
          </Line>
          <NavCell $w={40}>
            <Line w={20} sw={1.500}><path d="M1 7.500v5h3l5 4v-13l-5 4zM12 7.500a4 4 0 0 1 0 5M14.500 5a7.500 7.500 0 0 1 0 10M16.500 2.500a11 11 0 0 1 0 15" /></Line>
          </NavCell>
          <Fill w={20} h={18}>
            <path d="M6 4h10.500a1.500 1.500 0 0 1 1.500 1.500v8a1.500 1.500 0 0 1-1.500 1.500H6a1.500 1.500 0 0 1-1-1.500" fill="none" stroke="#fff" strokeWidth="1.400" />
            <path d="M8 5.800h8v7.400H7V9zM18.500 7.500H20v4h-1.500zM0 3h1V0h1.200v3h1.600V0H5v3h1v3.500L4 8v6H2V8L0 6.500z" fill="#fff" />
          </Fill>
          <Clock>23:02<br />1/10/2022</Clock>
        </Tray>
      </Taskbar>
    </Screen>
  );
}
